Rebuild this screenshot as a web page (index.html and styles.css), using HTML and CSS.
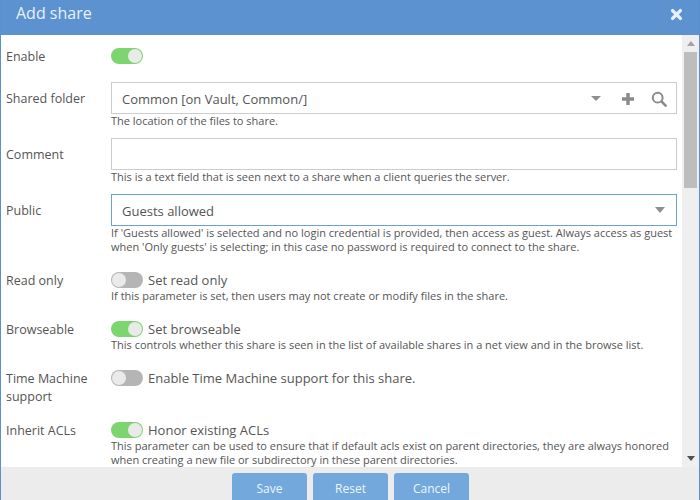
FILE: index.html
```html
<!DOCTYPE html>
<html lang="en">
<head>
<meta charset="utf-8">
<title>Add share</title>
<link rel="stylesheet" href="styles.css">
</head>
<body>
<div class="window">
  <header class="title-bar">
    <span class="title">Add share</span>
    <svg class="close" width="13" height="13" viewBox="0 0 13 13"><path d="M2.6 2.6 L10.4 10.4 M10.4 2.6 L2.6 10.4" stroke="#e8f0fa" stroke-width="3.4" stroke-linecap="round" fill="none"/></svg>
  </header>
  <div class="body">
    <form class="form">
      <div class="row row-toggle first">
        <label class="label">Enable</label>
        <div class="field"><div class="toggle-line"><span class="toggle on"><i></i></span></div></div>
      </div>
      <div class="row row-input after-toggle">
        <label class="label">Shared folder</label>
        <div class="field">
          <div class="input">
            <span class="value">Common [on Vault, Common/]</span>
            <svg class="caret" width="10" height="5" viewBox="0 0 10 5"><path d="M0 0 H10 L5 5 Z" fill="#8f8f8f"/></svg>
            <svg class="plus" width="14" height="14" viewBox="0 0 14 14"><path d="M7 1 V13 M1 7 H13" stroke="#8a8a8a" stroke-width="3.4" fill="none"/></svg>
            <svg class="search" width="16" height="16" viewBox="0 0 16 16"><circle cx="6.7" cy="6.7" r="4.9" stroke="#8a8a8a" stroke-width="2" fill="none"/><path d="M10.4 10.4 L14.6 14.6" stroke="#8a8a8a" stroke-width="2.6" stroke-linecap="round"/></svg>
          </div>
          <p class="hint">The location of the files to share.</p>
        </div>
      </div>
      <div class="row row-input">
        <label class="label">Comment</label>
        <div class="field">
          <div class="input"></div>
          <p class="hint">This is a text field that is seen next to a share when a client queries the server.</p>
        </div>
      </div>
      <div class="row row-input">
        <label class="label">Public</label>
        <div class="field">
          <div class="input focused">
            <span class="value">Guests allowed</span>
            <svg class="caret last" width="12" height="6" viewBox="0 0 12 6"><path d="M1 0 H11 L6 6 Z" fill="#8f8f8f"/></svg>
          </div>
          <p class="hint">If 'Guests allowed' is selected and no login credential is provided, then access as guest. Always access as guest when 'Only guests' is selecting; in this case no password is required to connect to the share.</p>
        </div>
      </div>
      <div class="row row-toggle">
        <label class="label">Read only</label>
        <div class="field">
          <div class="toggle-line"><span class="toggle"><i></i></span><span class="toggle-text">Set read only</span></div>
          <p class="hint hint-toggle">If this parameter is set, then users may not create or modify files in the share.</p>
        </div>
      </div>
      <div class="row row-toggle">
        <label class="label">Browseable</label>
        <div class="field">
          <div class="toggle-line"><span class="toggle on"><i></i></span><span class="toggle-text">Set browseable</span></div>
          <p class="hint hint-toggle">This controls whether this share is seen in the list of available shares in a net view and in the browse list.</p>
        </div>
      </div>
      <div class="row row-toggle">
        <label class="label">Time Machine support</label>
        <div class="field">
          <div class="toggle-line"><span class="toggle"><i></i></span><span class="toggle-text">Enable Time Machine support for this share.</span></div>
        </div>
      </div>
      <div class="row row-toggle">
        <label class="label">Inherit ACLs</label>
        <div class="field">
          <div class="toggle-line"><span class="toggle on"><i></i></span><span class="toggle-text">Honor existing ACLs</span></div>
          <p class="hint hint-toggle">This parameter can be used to ensure that if default acls exist on parent directories, they are always honored when creating a new file or subdirectory in these parent directories.</p>
        </div>
      </div>
    </form>
    <div class="scrollbar">
      <div class="arrow"><svg width="8" height="5" viewBox="0 0 8 5"><path d="M0 5 H8 L4 0 Z" fill="#a3a3a3"/></svg></div>
      <div class="track"><div class="thumb"></div></div>
      <div class="arrow"><svg width="8" height="5" viewBox="0 0 8 5"><path d="M0 0 H8 L4 5 Z" fill="#505050"/></svg></div>
    </div>
  </div>
  <footer class="footer">
    <button class="btn" type="button">Save</button>
    <button class="btn" type="button">Reset</button>
    <button class="btn" type="button">Cancel</button>
  </footer>
</div>
</body>
</html>
```
FILE: styles.css
```css
* { box-sizing: border-box; }
html, body { margin: 0; padding: 0; height: 100%; overflow: hidden; }
body { font-family: "Open Sans", "Liberation Sans", sans-serif; color: #555; background: #fff; }
.window {
  width: 700px; height: 500px; display: flex; flex-direction: column;
  border-left: 1px solid #5a90cc; border-right: 1px solid #5a90cc; overflow: hidden;
}
.title-bar {
  flex: none; height: 35px; margin: 0 -1px; background: #5b92cf; color: #e8f0fa;
  display: flex; align-items: center; justify-content: space-between;
  padding: 0 17px 0 16px;
}
.title { font-size: 16px; line-height: 27px; margin-bottom: 8px; }
.close { margin-bottom: 7px; }
.body { flex: none; height: 432px; display: flex; overflow: hidden; background: #fff; }
.form { flex: 1; min-width: 0; padding: 0 0 0 5px; overflow: hidden; }
.row { display: grid; grid-template-columns: 105px 566px; }
.label { font-size: 12.5px; line-height: 18px; color: #555; }
.row-toggle { margin-top: 18px; }
.row-toggle.first { margin-top: 13px; }
.row-toggle .label { margin: 0 0 -2px; }
.row-input { margin-top: 10px; }
.row-input.after-toggle { margin-top: 18px; }
.row-input .label { padding-top: 8px; }
.input {
  height: 32px; border: 1px solid #ccc; display: flex; align-items: center;
  padding: 0 10px; background: #fff;
}
.input.focused { border-color: #68a0d8; }
.value { flex: 1; font-size: 13px; color: #555; line-height: 30px; padding-top: 2px; }
.caret { margin: 1px 20px 0 0; }
.caret.last { margin: 0; }
.plus { margin: 1px 16px 0 0; }
.search { margin: 1px -1px 0 0; }
.hint { margin: 0; font-size: 11px; line-height: 14px; color: #555; }
.hint-toggle { margin-top: 1px; }
.toggle-line { display: flex; align-items: center; height: 16px; }
.toggle {
  width: 32px; height: 16px; border-radius: 8px; background: #b5b5b5; position: relative; flex: none;
}
.toggle i {
  position: absolute; left: 1px; top: 1px; width: 14px; height: 14px; border-radius: 50%; background: #eaeaea;
}
.toggle.on { background: #7cd56f; }
.toggle.on i { left: 17px; }
.toggle-text { font-size: 13px; margin-left: 5px; color: #555; line-height: 16px; }
.scrollbar { flex: none; width: 17px; background: #efefef; display: flex; flex-direction: column; }
.arrow { height: 17px; flex: none; display: flex; align-items: center; justify-content: center; }
.track { flex: 1; padding: 0 2px; }
.thumb { height: 136px; background: #bdbdbd; }
.footer {
  flex: 1; background: #ececec; display: flex; justify-content: center; gap: 6px;
  padding: 6px 0 0 1px;
}
.btn {
  width: 75px; height: 40px; border: 0; border-radius: 3px; background: #72a8dc; color: #eef5fc;
  font: 12px/16px "Open Sans", "Liberation Sans", sans-serif; padding: 0 0 8px;
}
```
